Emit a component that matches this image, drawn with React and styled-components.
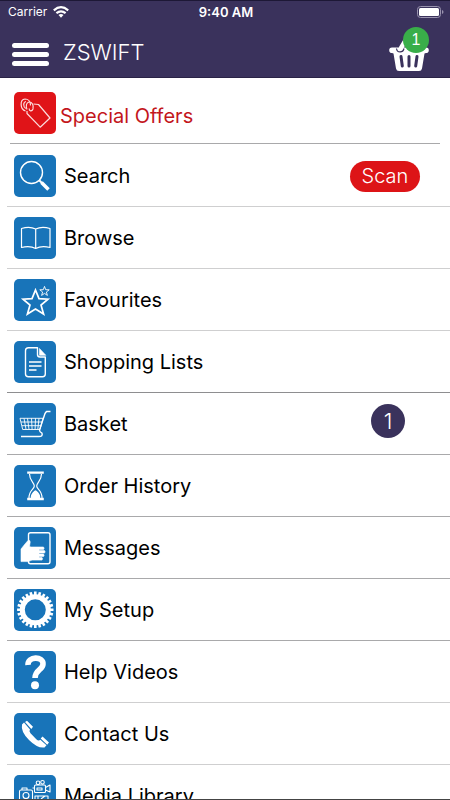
import React from "react";
import styled, { createGlobalStyle } from "styled-components";

const GlobalStyle = createGlobalStyle`
  *, *::before, *::after { box-sizing: border-box; }
  body { margin: 0; background: #fff; font-family: Inter, "Liberation Sans", sans-serif; color: #000; }
`;

const Screen = styled.div`
  height: 100vh;
  display: flex;
  flex-direction: column;
  overflow: hidden;
  border-bottom: 1px solid #444;
`;

const Header = styled.header`
  flex: none;
  background: #3a325c;
  color: #fff;
  border-top: 1px solid #1d1836;
  border-bottom: 1px solid #2a2346;
`;

const StatusBar = styled.div`
  display: grid;
  grid-template-columns: 1fr auto 1fr;
  align-items: center;
  height: 22px;
  padding: 0 6px 0 8px;
  font-size: 12px;
  line-height: 16px;
`;

const Carrier = styled.div`
  display: flex;
  align-items: center;
  gap: 6px;
`;

const Clock = styled.time`
  font-size: 13px;
  font-weight: 600;
`;

const Battery = styled.svg`
  justify-self: end;
`;

const TitleBar = styled.div`
  display: flex;
  align-items: center;
  height: 54px;
  padding: 0 20px 0 12px;
`;

const MenuButton = styled.button`
  display: flex;
  flex-direction: column;
  gap: 4px;
  width: 37px;
  margin-top: 8px;
  padding: 0;
  border: 0;
  background: none;
`;

const MenuBar = styled.span`
  width: 100%;
  height: 5px;
  border-radius: 3px;
  background: #fff;
`;

const Title = styled.h1`
  flex: 1;
  margin: 4px 0 0 14px;
  font-size: 22px;
  font-weight: 300;
  line-height: 26px;
`;

const BasketButton = styled.button`
  position: relative;
  width: 42px;
  height: 46px;
  padding: 0;
  border: 0;
  background: none;
  color: #fff;
`;

const BasketBadge = styled.span`
  position: absolute;
  top: 0;
  right: 1px;
  width: 26px;
  height: 26px;
  border-radius: 50%;
  background: #39ae49;
  font-size: 16px;
  font-weight: 300;
  line-height: 26px;
  text-align: center;
`;

const Menu = styled.main`
  flex: 1;
  min-height: 0;
  overflow: hidden;
`;

const Offers = styled.a`
  display: flex;
  align-items: center;
  gap: 4px;
  margin: 0 10px 1px;
  padding: 14px 4px 9px;
  border-bottom: 1px solid #a9a9ab;
  color: #c3161c;
  text-decoration: none;
`;

const List = styled.ul`
  margin: 0;
  padding: 0 0 0 7px;
  list-style: none;
`;

const Row = styled.li`
  display: flex;
  align-items: center;
  padding: 10px 30px 9px 7px;
  border-bottom: 1px solid ${(p) => p.$line};
`;

const RowLink = styled.a`
  flex: 1;
  display: flex;
  align-items: center;
  gap: 8px;
  color: #000;
  text-decoration: none;
`;

const Label = styled.span`
  padding-top: ${(p) => (p.$low ? "6px" : "0")};
  font-size: 20px;
  line-height: 26px;
  white-space: nowrap;
`;

const Tile = styled.svg`
  flex: none;
  display: block;
  width: 42px;
  height: 42px;
  border-radius: 5px;
  background: ${(p) => (p.$offer ? "#e01418" : "#1874b9")};
  fill: none;
  stroke: #fff;
  stroke-width: 1.4;
  stroke-linejoin: round;
`;

const ScanButton = styled.button`
  width: 70px;
  height: 31px;
  padding: 0;
  border: 0;
  border-radius: 16px;
  background: #dd1417;
  color: #fff;
  font-family: inherit;
  font-size: 20px;
  font-weight: 300;
  line-height: 30px;
`;

const Count = styled.span`
  width: 34px;
  height: 34px;
  margin: 0 15px 6px 0;
  border-radius: 50%;
  background: #3a325c;
  color: #fff;
  font-size: 22px;
  font-weight: 300;
  line-height: 34px;
  text-align: center;
`;

const teeth = Array.from({ length: 24 }, (_, i) => i * 15);

const drawings = {
  offers: (
    <g strokeWidth="1.200" stroke="#fbdcdc">
      <path d="M19.500 12l5 .5L36 26 26.200 35.200 13 21.500V19" />
      <path d="M11.500 19C6 17.500 5.500 7.500 11 7c3.500 0 5.500 3 5.500 6.500" />
      <path d="M11.800 16.500C9 15 9 10 12 9.500" />
      <path d="M13 17.500c-1.500-4-.5-7 2-7.500 3-.3 5 3.500 4 7-1.200 3-4 2-3.800-.5" />
    </g>
  ),
  search: (
    <g>
      <circle cx="17.500" cy="17.500" r="11" />
      <path d="M25.200 25.200l3 3" strokeWidth="2" />
      <path d="M27.500 27.500l7 7" strokeWidth="3.600" />
    </g>
  ),
  browse: (
    <path
      d="M21.700 12c-4-2-9.500-2-14.200-.5v19c5-1.300 10-1.300 14.200 1 4.200-2.300 9.200-2.300 14.300-1v-19c-4.800-1.500-10.300-1.500-14.300.5v19.500"
      strokeWidth="1.200"
    />
  ),
  favourites: (
    <g strokeLinejoin="miter">
      <path d="M21.500 11l3.500 8.600 9 .6-7 5.900 2.600 8.900-8.100-5-8.100 5 2.600-8.900-7-5.900 9-.6z" strokeWidth="1.700" />
      <path d="M30.500 7.400l1.200 3.300 3.500.1-2.800 2.200 1 3.400-2.900-2-2.900 2 1-3.400-2.800-2.200 3.500-.1z" strokeWidth=".9" />
    </g>
  ),
  lists: (
    <g>
      <path d="M23.500 6.800h-9q-3 0-3 3V33q0 2.700 3 2.700h14q2.800 0 2.800-2.700V16h-5.300q-2.500 0-2.500-2.500z" />
      <path d="M25.500 7.500v6.800h6.300z" fill="#fff" strokeWidth=".6" />
      <path d="M15 21h12.500M15 25h12.500M15 29h7.500" />
    </g>
  ),
  basket: (
    <g strokeWidth="1">
      <path d="M36.500 8.500h-4l-1.500 2-5.500 16.500q0 2 2.500 3.200 1 3.300-3 3.300H7" strokeWidth="1.400" />
      <path d="M6 15.300h23L26 26.500H8.700zM7 19h21M8 22.700h19M10 15.300l2 11M13.500 15.300l1.500 11M17.500 15.300l.6 11M21.500 15.300l-.4 11M25 15.300l-1.200 11" strokeWidth=".9" />
    </g>
  ),
  history: (
    <g>
      <path d="M13.200 7.600h16.600M13.200 34h16.600" strokeWidth="2.400" />
      <path d="M15.500 9c0 7 4.800 8.500 4.800 12S15 25 15 33M27.500 9c0 7-4.800 8.500-4.800 12s5.300 4 5.300 12" strokeWidth="1.200" />
      <path d="M17.500 33c-.5-3.500 1.500-5 4-7 2.500 2 4.500 3.500 4 7z" fill="#fff" />
    </g>
  ),
  messages: (
    <g>
      <rect x="14.500" y="5.800" width="21.500" height="31" rx="2" />
      <path
        d="M7 22l4-5 3-3.500q2.200-.8 2.200 1.500l-.7 4.500 1.500.5H29.500q1.300 1.300 0 2.600H25v1h5.500q1.300 1.300 0 2.500H25v1h4.500q1.300 1.300 0 2.500H25v1h3q1.200 1.200 0 2.500H18l-4 1.500H7z"
        fill="#fff"
        strokeWidth=".6"
      />
    </g>
  ),
  setup: (
    <g>
      <circle cx="21.300" cy="20.800" r="13" strokeWidth="5" />
      {teeth.map((a) => (
        <path key={a} d="M21.300 2.600v4" strokeWidth="2.600" transform={`rotate(${a} 21.300 20.800)`} />
      ))}
    </g>
  ),
  help: (
    <g>
      <path d="M14 14C13.500 5 29.500 5 29 13c0 6-8 5.500-8 14" strokeWidth="5.600" />
      <circle cx="21" cy="34.200" r="4" fill="#fff" stroke="none" />
    </g>
  ),
  contact: (
    <g fill="#fff" stroke="none">
      <path d="M8 11.500q-1.500 7 7 15.500t15.500 7.500l2-2.300-6.200-5.500q-1.700 1.700-4-.5l-5.800-6q-1.800-2.200-.5-3.700L10 9.500z" />
      <path d="M11 9l2-1.300 6 6-1.700 2.200zM26.700 25.500l1.800-2 6.500 6-1.800 2.200z" />
    </g>
  ),
  media: (
    <g strokeWidth="1.100">
      <rect x="5.500" y="15" width="13" height="12" rx="1.500" />
      <circle cx="12" cy="20.500" r="3" />
      <path d="M8 15v-2h5v2" />
      <rect x="20.500" y="10" width="11" height="7.500" rx="1" />
      <circle cx="24" cy="7.800" r="1.800" />
      <circle cx="28.500" cy="7.300" r="1.800" />
      <path d="M31.500 12.500l4.500-2.500v7l-4.500-2M18.500 13h2M23 13h5v2h-5zM21 21h13v13H21zM24 21v13M27 24l4-3" />
    </g>
  ),
};

const items = [
  { id: "search", label: "Search", line: "#cfcfd0", scan: true },
  { id: "browse", label: "Browse", line: "#cfcfd0" },
  { id: "favourites", label: "Favourites", line: "#cfcfd0" },
  { id: "lists", label: "Shopping Lists", line: "#8e8e90" },
  { id: "basket", label: "Basket", line: "#a9a9ab", count: 1 },
  { id: "history", label: "Order History", line: "#a9a9ab" },
  { id: "messages", label: "Messages", line: "#a9a9ab" },
  { id: "setup", label: "My Setup", line: "#a9a9ab" },
  { id: "help", label: "Help Videos", line: "#cfcfd0" },
  { id: "contact", label: "Contact Us", line: "#cfcfd0" },
  { id: "media", label: "Media Library", line: "#cfcfd0" },
];

function TileIcon({ name, offer }) {
  return (
    <Tile viewBox="0 0 42 42" $offer={offer} aria-hidden="true">
      {drawings[name]}
    </Tile>
  );
}

export default function App() {
  return (
    <Screen>
      <GlobalStyle />
      <Header>
        <StatusBar>
          <Carrier>
            Carrier
            <svg width="16" height="12" viewBox="0 0 16 12" fill="none" stroke="#fff" strokeWidth="2.200" aria-hidden="true">
              <path d="M.8 4.300q7.200-6.200 14.400 0M3.400 7.200q4.600-3.800 9.200 0" />
              <path d="M5.500 9q2.500-1.900 5 0L8 11.700z" fill="#fff" stroke="none" />
            </svg>
          </Carrier>
          <Clock>9:40 AM</Clock>
          <Battery width="27" height="12" viewBox="0 0 27 12" aria-label="Battery full">
            <rect x=".5" y=".5" width="23" height="11" rx="3" fill="none" stroke="#9993ae" />
            <rect x="2" y="2" width="20" height="8" rx="1.500" fill="#fff" />
            <path d="M25 4q1.500.5 1.500 2T25 8z" fill="#9993ae" />
          </Battery>
        </StatusBar>
        <TitleBar>
          <MenuButton aria-label="Menu">
            <MenuBar />
            <MenuBar />
            <MenuBar />
          </MenuButton>
          <Title>ZSWIFT</Title>
          <BasketButton aria-label="Basket, 1 item">
            <svg width="42" height="46" viewBox="0 0 42 46" aria-hidden="true">
              <path d="M19 11L13 21" stroke="#fff" strokeWidth="4.500" strokeLinecap="round" />
              <path d="M4 20.500h34a2.800 2.800 0 010 5.600l-1.500.4L34 41.500q-.5 2.500-3 2.500H11q-2.500 0-3-2.500L5.500 26.500 4 26.100a2.800 2.800 0 010-5.600z" fill="#fff" />
              <path d="M8.500 21.500c.5 4.500 6.500 4.500 7.500 0" fill="#fff" stroke="#3a325c" strokeWidth="1.200" />
              <path d="M13 29.500l1.300 9.500M21 29.500V39M29 29.500L27.700 39" stroke="#3a325c" strokeWidth="3" strokeLinecap="round" />
            </svg>
            <BasketBadge>1</BasketBadge>
          </BasketButton>
        </TitleBar>
      </Header>
      <Menu>
        <Offers href="#offers">
          <TileIcon name="offers" offer />
          <Label $low>Special Offers</Label>
        </Offers>
        <List>
          {items.map((item) => (
            <Row key={item.id} $line={item.line}>
              <RowLink href={`#${item.id}`}>
                <TileIcon name={item.id} />
                <Label>{item.label}</Label>
              </RowLink>
              {item.scan && <ScanButton>Scan</ScanButton>}
              {item.count && <Count>{item.count}</Count>}
            </Row>
          ))}
        </List>
      </Menu>
    </Screen>
  );
}
